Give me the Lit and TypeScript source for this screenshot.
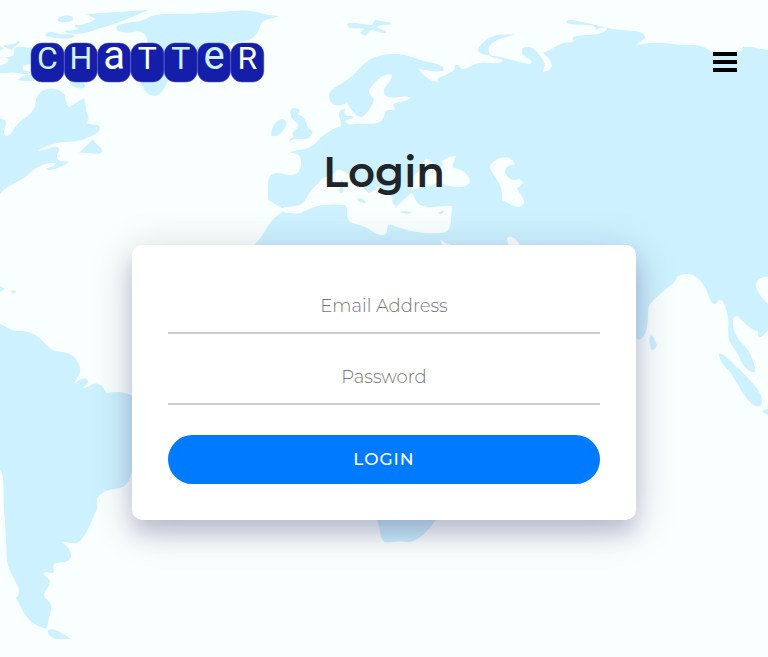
import { LitElement, html, css, svg } from "lit";
import { customElement } from "lit/decorators.js";

const LAND = [
  // Eurasia and northern Africa
  "M254 245C266 235 266 222 282 212L282 208L268 200V184C268 177 271 173 277 173C284 173 290 177 296 174C301 171 302 162 300 157C298 153 294 154 290 152C300 149 309 150 316 143C324 134 330 130 341 126C342 122 339 119 339 114C340 110 342 109 345 109C344 114 345 116 349 116C352 115 354 117 353 118C350 120 347 119 345 121C347 125 350 125 354 124C364 123 373 125 380 122C384 119 384 115 386 111C389 109 393 111 395 109L393 105C396 101 404 103 411 98C405 94 396 99 388 97C383 95 383 90 385 88C388 83 392 80 392 76C390 73 387 74 383 76C378 79 369 87 369 92C370 96 374 97 374 100C372 106 367 114 362 117C357 117 354 113 350 108L347 102C344 105 341 106 336 105C331 104 329 100 329 95C331 87 341 85 347 80C357 73 359 67 369 60C377 55 387 54 397 54C409 55 413 58 421 60C431 64 441 62 444 69C442 74 428 70 418 69C421 72 427 79 432 81L438 82C436 77 441 77 446 75C449 72 454 72 455 69C453 66 456 64 458 65C461 66 459 69 463 69C469 69 473 63 480 63C489 62 497 65 503 61C502 58 495 59 490 56C484 54 478 54 478 49C482 42 488 37 497 35C504 34 508 35 515 34C508 37 499 38 494 42C487 46 487 52 492 56C501 56 520 63 530 64C533 61 531 60 528 58C524 56 521 54 522 50C523 46 529 46 534 49C540 55 543 59 545 64C545 68 542 70 543 72C547 72 551 69 552 66C552 60 546 57 543 52C551 51 556 45 563 43C567 42 572 43 574 41C574 39 572 40 573 37C581 34 593 36 601 33C605 32 607 30 607 28C603 27 600 28 595 30C596 25 592 26 588 25C581 24 567 26 567 22C568 19 573 20 578 21L613 29C622 31 645 29 645 37C645 40 639 42 636 45C642 45 649 42 657 43C675 43 680 46 690 45C700 44 706 48 713 53C719 57 732 55 738 52C743 52 742 49 743 47C751 46 760 49 768 50V277C761 276 756 280 756 286C757 293 763 299 768 304V331C765 332 763 337 760 337C757 336 759 332 757 331C750 330 743 320 737 316C733 315 732 323 734 330C737 341 748 346 751 356C753 361 756 367 755 372C749 374 742 364 740 359C738 352 731 346 729 340C727 332 730 320 727 313C725 305 723 299 719 300C717 302 717 304 714 304C709 302 708 291 704 286C701 281 696 275 689 274C683 274 677 275 676 279C674 284 669 286 664 291C657 297 648 303 648 311C648 326 647 334 641 339C639 340 637 339 636 338L400 360Z",
  // North America
  "M0 194C9 183 22 182 31 172C37 166 49 162 54 163C59 161 56 165 50 167L46 169C49 172 62 167 69 162C65 161 58 162 57 158C56 154 60 151 59 148C56 144 46 150 38 151C45 146 55 143 64 142C77 142 89 139 98 132C102 128 99 124 94 125L87 123C91 118 86 114 86 107L84 98L69 107C64 101 67 97 63 93C57 87 46 87 40 93C34 98 37 104 33 110C29 117 21 119 17 125C13 129 10 138 6 136C1 133 8 125 5 120L0 118Z",
  "M0 171L4 170L0 174ZM79 153L93 139C94 144 103 147 102 152C98 156 89 152 79 153Z",
  "M0 73L8 73C14 71 24 76 32 73C27 70 21 72 23 66C29 63 41 64 39 58C32 55 35 51 32 47C26 49 23 45 15 48C13 51 16 53 12 56C8 58 0 56 0 59C5 56 10 58 8 62L0 66Z",
  "M3 46C8 43 14 46 18 41L20 42L11 50ZM0 46L4 48L0 51ZM58 19C60 15 73 14 73 19C72 23 60 23 58 21ZM45 36C46 31 52 31 59 34C66 35 73 33 75 36C72 40 58 39 50 37ZM18 80C25 73 33 74 38 78C36 82 26 82 18 80ZM64 31C70 30 75 31 79 28C74 28 73 25 77 25C84 26 91 21 96 19L86 14L148 10C132 17 112 26 100 28C88 33 78 35 68 33ZM70 78C74 82 86 80 85 86C84 91 75 88 70 84Z",
  // Greenland
  "M116 28C118 21 141 24 149 17C160 12 182 15 201 13C217 14 232 9 250 11C260 12 267 16 279 16C270 20 264 18 261 24C258 33 255 39 246 41L215 45L168 81C163 92 159 96 154 96C145 95 142 87 139 75L147 43C148 36 143 30 134 32C127 33 117 33 116 28Z",
  // Svalbard
  "M347 24C351 21 359 24 372 25L375 20L392 23C389 27 380 23 377 27C381 31 387 29 386 33C382 34 375 30 371 30L365 36L360 33L364 29C358 27 348 31 347 24Z",
  // Ireland and Britain
  "M271 135C272 125 277 119 283 119C290 122 285 128 282 132C277 137 272 137 271 135ZM291 115C288 108 294 106 300 110C299 114 295 114 302 116C307 121 307 127 309 129C315 131 312 134 309 138C305 141 297 137 289 141C290 137 296 138 292 134C293 130 299 129 298 125C296 120 290 119 291 115Z",
  // South America
  "M0 324C10 328 9 331 21 331C41 332 42 345 55 351C63 352 74 353 77 361C83 370 80 374 73 385C79 380 84 376 88 380C89 384 84 386 83 388C89 388 92 382 98 384C105 386 104 392 107 393C117 391 128 392 136 398V456C127 497 123 484 104 492C91 499 101 503 96 511C91 523 83 542 77 543C73 544 68 542 62 542C67 546 72 551 71 557C69 563 62 562 56 563C50 565 57 573 52 573C49 573 46 570 44 574C45 578 51 578 50 583C48 589 42 593 45 598C50 602 52 604 51 609C50 616 48 620 48 625C46 631 44 628 38 626C26 621 22 608 16 598C20 594 20 589 16 583C12 574 8 569 7 560C6 544 6 530 4 513C3 491 5 475 0 470Z",
  "M48 630C55 627 61 633 71 639H56C51 638 47 634 48 630ZM0 286L5 289L0 292ZM11 291C13 290 16 291 16 292L13 294Z",
  // southern Africa
  "M375 515C381 529 379 531 382 539C385 546 392 540 406 542C417 542 425 535 438 517Z",
  // islands of the Indian Ocean
  "M650 336C653 334 655 340 657 345C655 350 653 351 651 349C649 344 649 340 650 336ZM719 354C723 352 733 364 739 369C749 380 762 390 762 401C762 408 757 408 751 403C740 392 734 375 728 370C724 366 719 360 719 354ZM762 411C764 409 767 410 768 409V415L764 413Z",
];

const SEAS = [
  // Mediterranean
  "M282 208C292 205 299 209 306 199C312 186 319 185 321 179C328 176 333 175 337 170C347 170 354 178 359 184L369 193L377 189L372 184L384 190L392 197C397 200 397 205 394 209L411 193C416 197 415 204 423 206C433 209 443 205 452 206L451 220C450 234 444 233 436 233C417 234 403 229 392 225C384 223 390 233 384 235C376 236 372 230 365 227C357 223 347 225 347 214C348 207 346 204 340 205C319 203 309 209 301 213C293 214 288 213 282 212Z",
  // Black Sea
  "M412 190C424 186 430 187 437 183C442 183 448 187 457 187C470 187 473 181 467 175C463 169 456 169 452 167L456 156C450 156 443 160 441 162C444 165 443 167 438 167C433 166 431 159 426 158C422 163 422 172 412 176Z",
  // Caspian Sea
  "M490 167C491 161 503 155 509 158C513 160 516 163 514 165C509 164 504 168 505 173C508 178 513 182 519 179C524 181 524 184 517 188C519 194 525 198 524 203C519 211 511 204 502 200C503 188 500 184 490 169Z",
  // Red Sea and Persian Gulf
  "M440 240C444 241 448 246 449 243L456 250H445ZM507 238C511 234 517 240 522 247L509 249Z",
];

const ISLANDS = [
  "M340 180C343 177 344 184 341 183ZM341 186C345 184 344 193 341 193L339 190ZM357 199C361 196 365 200 366 203C362 203 358 202 357 199ZM392 201C393 195 396 193 398 198C401 203 397 206 394 205ZM400 212C405 210 409 211 412 213C406 214 403 214 400 212ZM438 213L444 210C444 213 440 216 438 213Z",
];

const LOGO_LETTERS = [
  { ch: "C", tone: "mist" },
  { ch: "H", tone: "mist" },
  { ch: "a", tone: "snow" },
  { ch: "T", tone: "snow" },
  { ch: "T", tone: "mist" },
  { ch: "e", tone: "mist" },
  { ch: "R", tone: "snow" },
];

@customElement("world-map")
export class WorldMap extends LitElement {
  static styles = css`
    :host { display: block; }
    .map { display: block; width: 100%; height: 100%; }
    .land { fill: #cdf1fe; }
    .sea { fill: #f9fffe; }
  `;

  render() {
    return html`
      <svg class="map" viewBox="0 0 768 657" preserveAspectRatio="xMidYMid slice" aria-hidden="true">
        ${LAND.map((d) => svg`<path class="land" d=${d}></path>`)}
        ${SEAS.map((d) => svg`<path class="sea" d=${d}></path>`)}
        ${ISLANDS.map((d) => svg`<path class="land" d=${d}></path>`)}
      </svg>
    `;
  }
}

@customElement("chatter-logo")
export class ChatterLogo extends LitElement {
  static styles = css`
    :host { display: block; }
    .logo { display: block; width: 235px; height: 40px; overflow: visible; }
    .tile { fill: #151ea8; stroke: #4a55c0; stroke-width: 0.5; }
    .letter { font-family: Roboto, sans-serif; font-size: 32px; text-anchor: middle; }
    .small { font-size: 40px; }
    .mist { fill: #cdf1fe; }
    .snow { fill: #f9fffe; }
  `;

  render() {
    return html`
      <svg class="logo" viewBox="0 0 235 40" role="img" aria-label="Chatter">
        ${LOGO_LETTERS.map(({ ch, tone }, i) => {
          const x = 1 + i * 33.3;
          const size = ch === ch.toLowerCase() ? "small" : "";
          return svg`
            <rect class="tile" x=${x} y="1" width="33" height="39" rx="11"></rect>
            <text class="letter ${size} ${tone}" x=${x + 16.5} y="27">${ch}</text>
          `;
        })}
      </svg>
    `;
  }
}

@customElement("app-root")
export class AppRoot extends LitElement {
  static styles = css`
    * { box-sizing: border-box; }
    :host {
      display: block;
      position: relative;
      min-height: 100vh;
      background: #f9fffe;
      color: #212529;
      font-family: Montserrat, Inter, sans-serif;
    }
    .backdrop { position: absolute; inset: 0; }
    .page { position: relative; }
    .bar {
      display: flex;
      align-items: center;
      justify-content: space-between;
      padding: 42px 30px 0;
    }
    .menu {
      display: flex;
      flex-direction: column;
      gap: 4px;
      width: 26px;
      padding: 0 1px;
      border: 0;
      background: none;
      cursor: pointer;
    }
    .stripe { height: 4px; background: #000; }
    .content { max-width: 720px; margin: 0 auto; padding: 60px 0; }
    .title {
      margin: 0 0 43px;
      font-size: 42px;
      font-weight: 600;
      line-height: 60px;
      text-align: center;
    }
    .card {
      display: flex;
      flex-direction: column;
      gap: 18px;
      width: 70%;
      margin: 0 auto;
      padding: 36px;
      border-radius: 10px;
      background: #fff;
      box-shadow: 0 14px 20px rgba(20, 10, 80, 0.16), 0 8px 44px rgba(20, 10, 80, 0.18);
    }
    .field {
      width: 100%;
      height: 53px;
      padding: 0 0 2px;
      border: 0;
      border-bottom: 2px solid #ccc;
      border-radius: 0;
      outline: 0;
      background: none;
      color: #212529;
      font: 300 18px/24px Montserrat, Inter, sans-serif;
      text-align: center;
    }
    .field::placeholder { color: #757575; opacity: 1; }
    .field:focus { border-color: #007bff; }
    .submit {
      height: 49px;
      margin-top: 12px;
      padding: 0 0 2px;
      border: 0;
      border-radius: 25px;
      background: #007bff;
      color: #fff;
      font: 500 17px/24px Montserrat, Inter, sans-serif;
      letter-spacing: 1px;
      text-transform: uppercase;
      cursor: pointer;
    }
  `;

  render() {
    return html`
      <world-map class="backdrop"></world-map>
      <div class="page">
        <header class="bar">
          <a href="#" aria-label="Chatter home"><chatter-logo></chatter-logo></a>
          <button class="menu" type="button" aria-label="Open menu">
            <span class="stripe"></span>
            <span class="stripe"></span>
            <span class="stripe"></span>
          </button>
        </header>
        <main class="content">
          <h1 class="title">Login</h1>
          <form class="card" @submit=${(e: Event) => e.preventDefault()}>
            <input class="field" type="email" name="email" placeholder="Email Address" aria-label="Email Address" />
            <input class="field" type="password" name="password" placeholder="Password" aria-label="Password" />
            <button class="submit" type="submit">Login</button>
          </form>
        </main>
      </div>
    `;
  }
}
